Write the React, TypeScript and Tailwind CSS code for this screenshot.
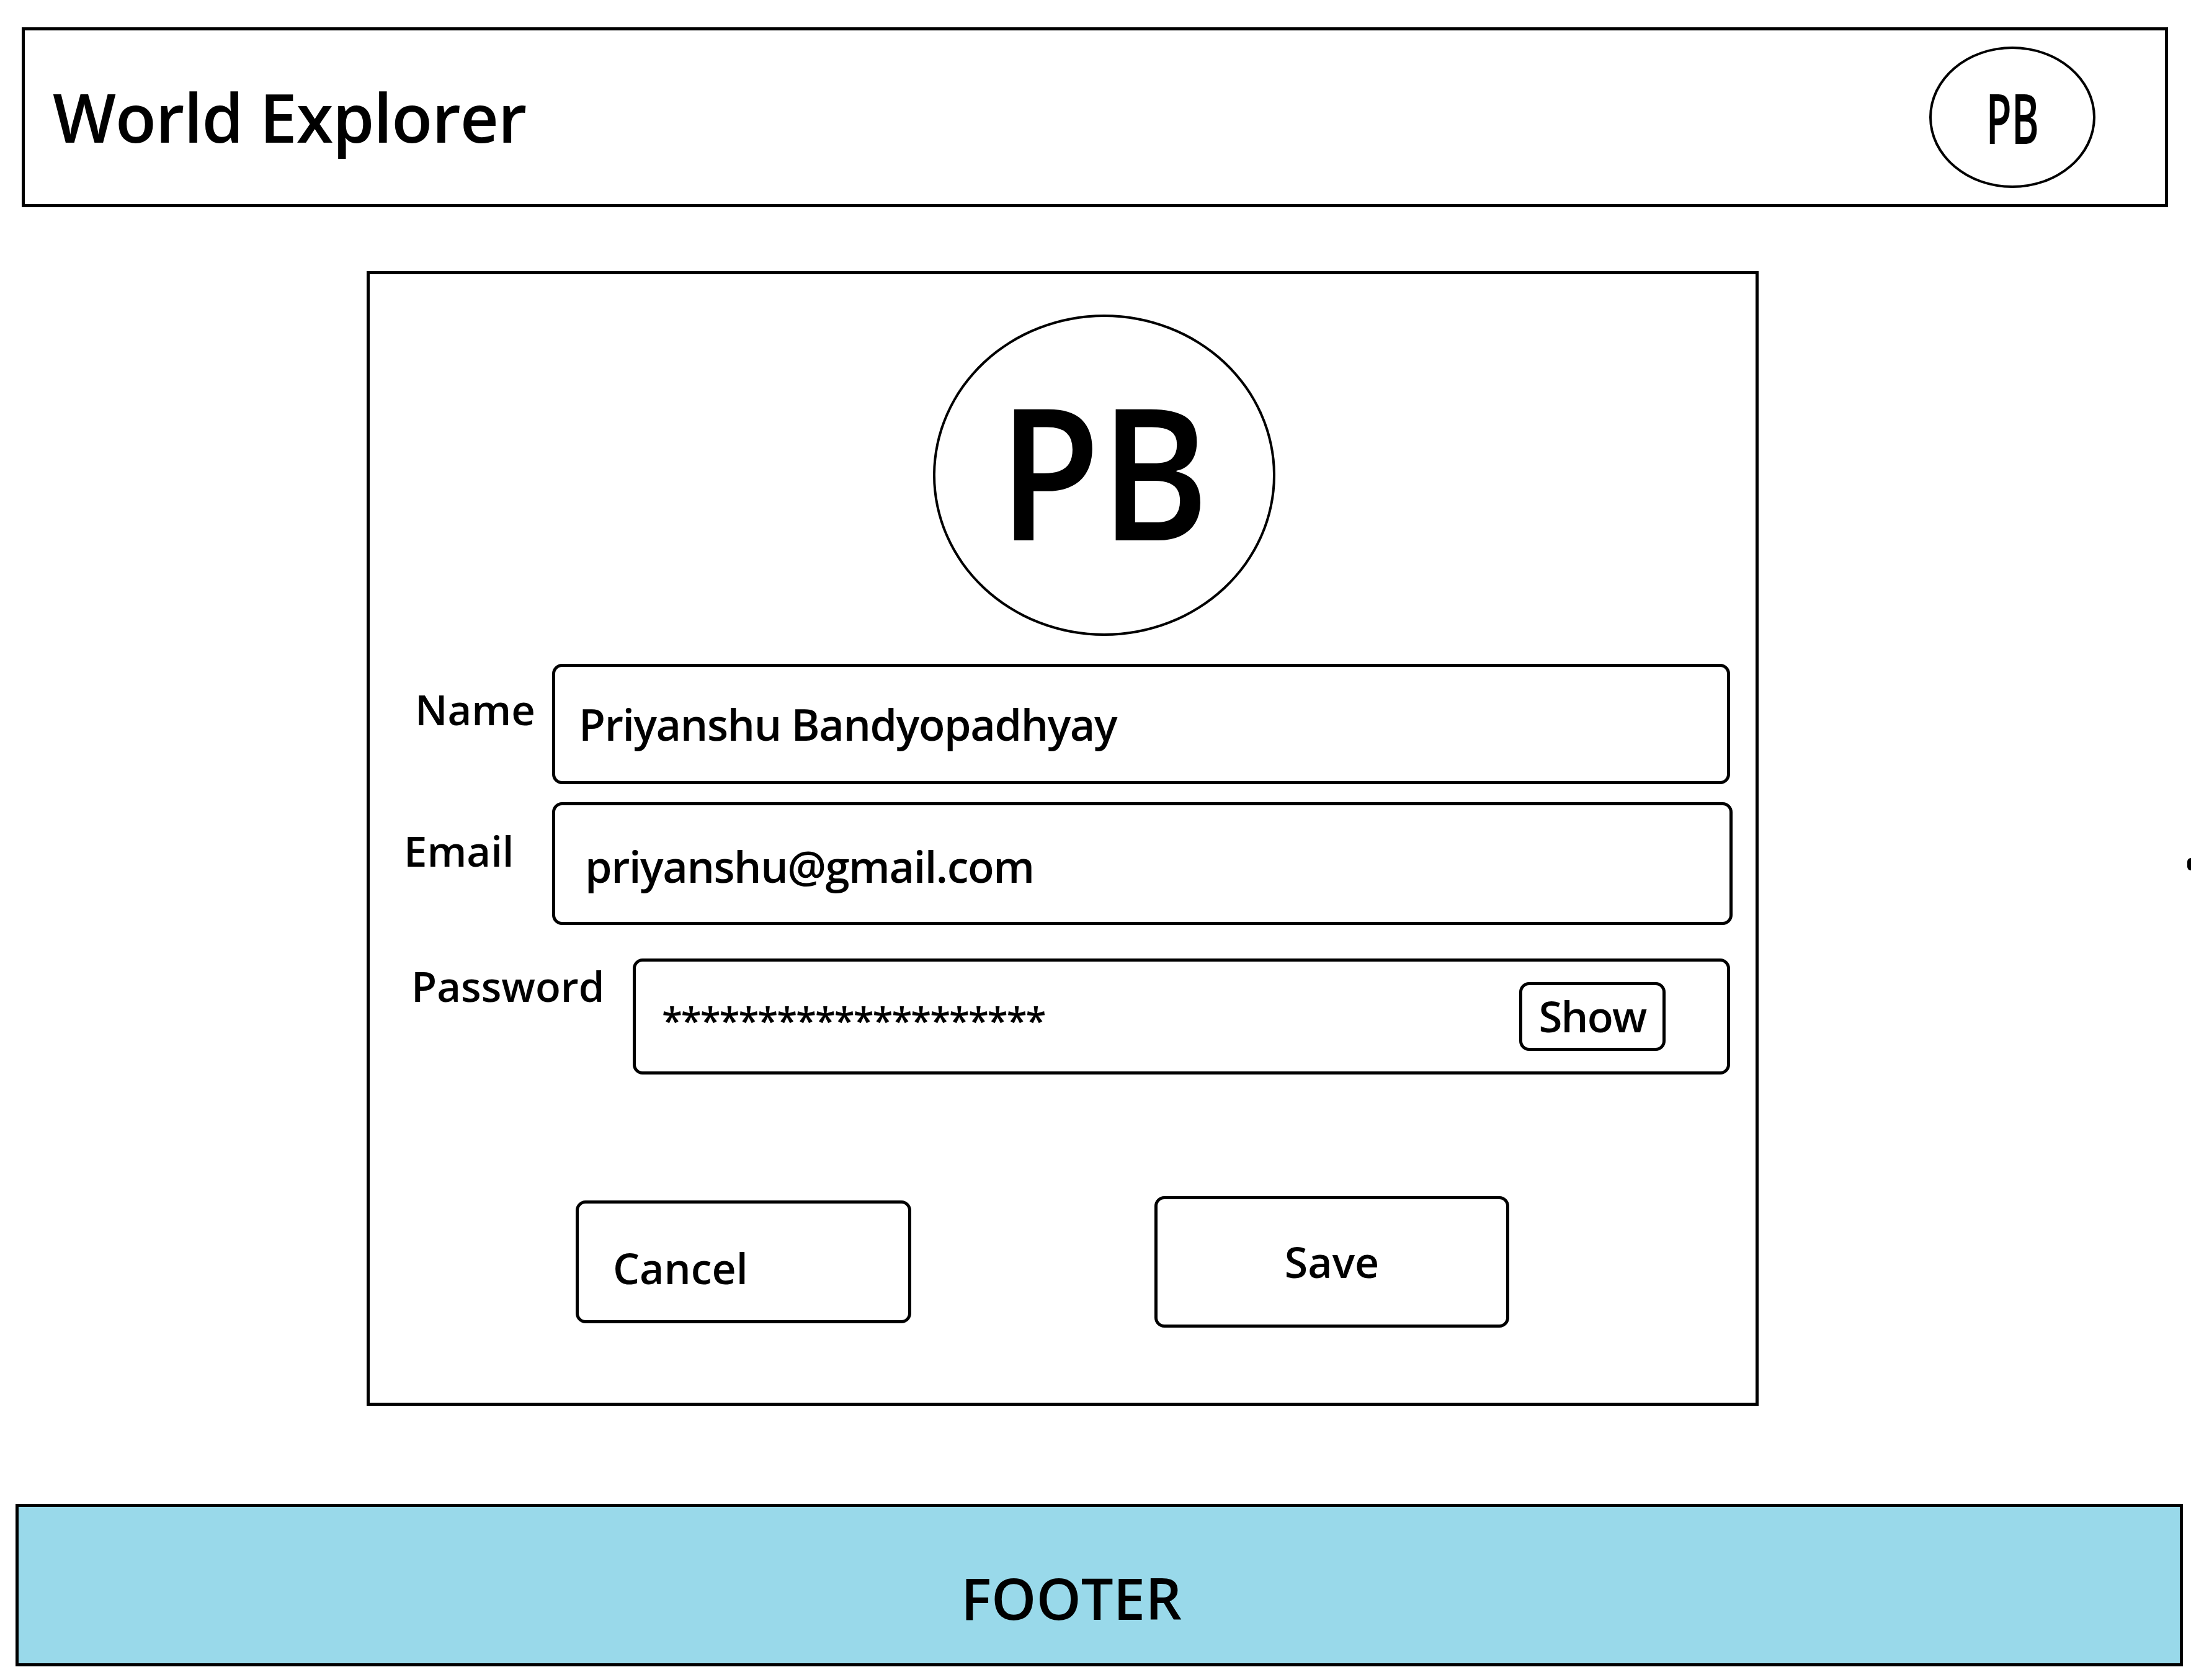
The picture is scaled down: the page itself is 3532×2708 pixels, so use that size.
import React from "react";

export default function App() {
  return (
    <div className="relative w-[3532px] h-[2708px] overflow-hidden bg-white text-black font-['Open_Sans',sans-serif]">
      <div className="flex flex-col pt-[44px]">
        {/* Header */}
        <header className="ml-[35px] w-[3460px] h-[290px] border-[5px] border-black flex items-center justify-between">
          <h1 className="pl-[45px] text-[108px] leading-none font-semibold tracking-[-0.01em]">World Explorer</h1>
          <div className="mr-[112px] w-[268px] h-[228px] rounded-[50%] border-[4px] border-black flex items-center justify-center">
            <span className="text-[112px] leading-none font-semibold scale-x-[0.6]">PB</span>
          </div>
        </header>

        {/* Profile card */}
        <section className="mt-[103px] ml-[591px] w-[2244px] h-[1829px] border-[5px] border-black flex flex-col">
          <div className="mt-[65px] ml-[908px] w-[552px] h-[518px] rounded-[50%] border-[4px] border-black flex items-center justify-center pb-[18px]">
            <span className="text-[296px] leading-none font-semibold scale-x-[0.9]">PB</span>
          </div>

          {/* Name */}
          <div className="mt-[45px] flex items-start">
            <div className="w-[294px] pl-[73px] pt-[40px]">
              <span className="text-[67px] leading-none font-semibold">Name</span>
            </div>
            <div className="w-[1899px] h-[194px] rounded-[16px] border-[5px] border-black flex items-center pl-[38px]">
              <span className="text-[70px] leading-none font-semibold tracking-[-0.02em]">Priyanshu Bandyopadhyay</span>
            </div>
          </div>

          {/* Email */}
          <div className="mt-[29px] flex items-start">
            <div className="w-[294px] pl-[55px] pt-[45px]">
              <span className="text-[67px] leading-none font-semibold">Email</span>
            </div>
            <div className="w-[1903px] h-[198px] rounded-[16px] border-[5px] border-black flex items-center pl-[48px] pt-[8px]">
              <span className="text-[70px] leading-none font-semibold tracking-[-0.02em]">priyanshu@gmail.com</span>
            </div>
          </div>

          {/* Password */}
          <div className="mt-[54px] flex items-start">
            <div className="w-[424px] pl-[67px] pt-[11px]">
              <span className="text-[67px] leading-none font-semibold">Password</span>
            </div>
            <div className="w-[1769px] h-[187px] rounded-[16px] border-[5px] border-black flex items-center justify-between pl-[42px] pr-[99px]">
              <span className="text-[60px] leading-none font-semibold tracking-[-2px] pt-[10px]">********************</span>
              <button className="w-[236px] h-[111px] rounded-[16px] border-[5px] border-black flex items-center justify-center pb-[2px]">
                <span className="text-[69px] leading-none font-semibold tracking-[-0.025em]">Show</span>
              </button>
            </div>
          </div>

          {/* Buttons */}
          <div className="mt-[196px] ml-[332px] flex items-center">
            <button className="w-[541px] h-[198px] rounded-[16px] border-[5px] border-black flex items-center pl-[55px] pt-[20px]">
              <span className="text-[68px] leading-none font-semibold">Cancel</span>
            </button>
            <button className="ml-[392px] w-[572px] h-[212px] rounded-[16px] border-[5px] border-black flex items-center justify-center">
              <span className="text-[68px] leading-none font-semibold">Save</span>
            </button>
          </div>
        </section>

        {/* Footer */}
        <footer className="mt-[158px] ml-[25px] w-[3494px] h-[262px] border-[5px] border-black bg-[#99d9ea] flex items-start pl-[1519px] pt-[101px]">
          <span className="text-[92px] leading-none font-semibold">FOOTER</span>
        </footer>
      </div>

      {/* stray dot at right edge */}
      <div className="absolute left-[3526px] top-[1383px] w-[12px] h-[20px] rounded-full bg-black" />
    </div>
  );
}
